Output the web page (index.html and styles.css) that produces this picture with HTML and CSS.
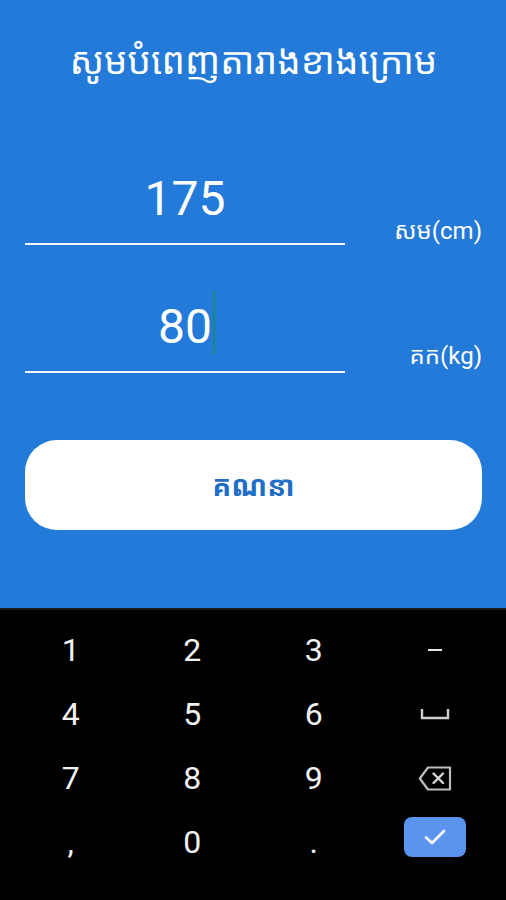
FILE: index.html
```html
<!DOCTYPE html>
<html lang="km">
<head>
  <meta charset="UTF-8" />
  <title>BMI - គណនា</title>
  <link rel="stylesheet" href="styles.css">
</head>
<body>

  <div class="form">
    <h1 class="title">សូមបំពេញតារាងខាងក្រោម</h1>

    <div class="field first">
      <div class="input"><span class="value">175</span></div>
      <span class="unit">សម(cm)</span>
    </div>

    <div class="field second">
      <div class="input"><span class="value">80<span class="caret"></span></span></div>
      <span class="unit">គក(kg)</span>
    </div>

    <button class="calc">គណនា</button>
  </div>

  <div class="keyboard">
    <div class="key">1</div>
    <div class="key">2</div>
    <div class="key">3</div>
    <div class="key"><span class="minus"></span></div>
    <div class="key">4</div>
    <div class="key">5</div>
    <div class="key">6</div>
    <div class="key">
      <svg width="30" height="12" viewBox="0 0 30 12">
        <path d="M2 1 V10 H28 V1" fill="none" stroke="#cfcfcf" stroke-width="2.4" />
      </svg>
    </div>
    <div class="key">7</div>
    <div class="key">8</div>
    <div class="key">9</div>
    <div class="key">
      <svg width="34" height="25" viewBox="0 0 34 25">
        <path d="M10 1.5 H32 V23.5 H10 L1.8 12.5 Z" fill="none" stroke="#bdbdbd" stroke-width="2.2" stroke-linejoin="round" />
        <path d="M15.5 7.5 L25 17 M25 7.5 L15.5 17" stroke="#d8d8d8" stroke-width="2.4" stroke-linecap="round" />
      </svg>
    </div>
    <div class="key punct">,</div>
    <div class="key">0</div>
    <div class="key punct">.</div>
    <div class="key">
      <span class="done">
        <svg width="22" height="16" viewBox="0 0 22 16">
          <path d="M2 8.5 L8 14 L20 2" fill="none" stroke="#ffffff" stroke-width="2.6" stroke-linecap="round" stroke-linejoin="round" />
        </svg>
      </span>
    </div>
  </div>

</body>
</html>
```

FILE: styles.css
```css
* {
  box-sizing: border-box;
}

body {
  margin: 0;
  padding: 0;
  background: #000;
  font-family: Roboto, "Noto Sans Khmer", "Khmer OS", "Khmer OS System", "Noto Serif Khmer", sans-serif;
}

.form {
  height: 608px;
  background: #237ad8;
  padding: 40px 24px 0 25px;
  display: flex;
  flex-direction: column;
}

.title {
  margin: 0;
  text-align: center;
  color: #fff;
  font-size: 37px;
  font-weight: 400;
  line-height: 44px;
}

.field {
  display: flex;
  justify-content: space-between;
  align-items: flex-end;
}

.field.first {
  margin-top: 87px;
}

.field.second {
  margin-top: 54px;
}

.input {
  width: 320px;
  text-align: center;
  padding-bottom: 16px;
  border-bottom: 2px solid #f4f6fb;
}

.value {
  position: relative;
  color: #fff;
  font-size: 48px;
  line-height: 56px;
}

.caret {
  position: absolute;
  right: -3px;
  top: -7px;
  width: 2px;
  height: 63px;
  background: #148c78;
}

.unit {
  color: #fff;
  font-size: 24px;
  line-height: 28px;
}

.field.second .unit {
  margin-bottom: 3px;
}

.calc {
  margin-top: 67px;
  height: 90px;
  border: none;
  border-radius: 32px;
  background: #fff;
  color: #1f6ec6;
  font-family: inherit;
  font-size: 28px;
  font-weight: 700;
}

.keyboard {
  border-top: 2px solid #1b1b1b;
  padding: 8px 10px 26px;
  display: grid;
  grid-template-columns: repeat(4, 1fr);
  grid-auto-rows: 64px;
}

.key {
  display: flex;
  align-items: center;
  justify-content: center;
  color: #f2f2f2;
  font-size: 32px;
}

.minus {
  width: 14px;
  height: 2px;
  background: #e6e6e6;
}

.done {
  width: 62px;
  height: 40px;
  border-radius: 8px;
  background: #5b94ef;
  display: flex;
  align-items: center;
  justify-content: center;
  margin-top: -10px;
}
```
